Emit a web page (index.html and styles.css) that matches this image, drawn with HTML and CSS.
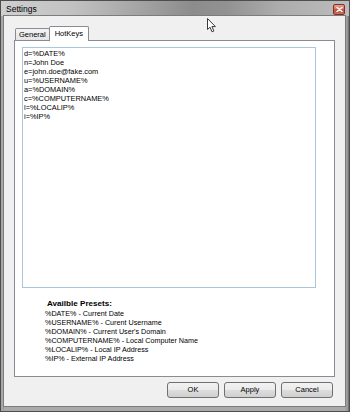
FILE: index.html
```html
<!DOCTYPE html>
<html>
<head>
<meta charset="utf-8">
<link rel="stylesheet" href="styles.css">
</head>
<body>
<div class="window">
  <div class="titlebar">
    <span class="title">Settings</span>
    <span class="close"><svg width="7" height="5" viewBox="0 0 7 5"><path d="M1 0.5 L6 4.5 M6 0.5 L1 4.5" stroke="#fff" stroke-width="1.4" stroke-linecap="round"/></svg></span>
  </div>
  <div class="client">
    <div class="tabs">
      <div class="tab">General</div>
      <div class="tab active">HotKeys</div>
    </div>
    <div class="panel">
      <div class="textbox">
        <div>d=%DATE%</div>
        <div>n=John Doe</div>
        <div>e=john.doe@fake.com</div>
        <div>u=%USERNAME%</div>
        <div>a=%DOMAIN%</div>
        <div>c=%COMPUTERNAME%</div>
        <div>l=%LOCALIP%</div>
        <div>i=%IP%</div>
      </div>
      <div class="presets">
        <div class="presets-title">Availble Presets:</div>
        <div>%DATE% - Current Date</div>
        <div>%USERNAME% - Curent Username</div>
        <div>%DOMAIN% - Current User's Domain</div>
        <div>%COMPUTERNAME% - Local Computer Name</div>
        <div>%LOCALIP% - Local IP Address</div>
        <div>%IP% - External IP Address</div>
      </div>
    </div>
    <div class="buttons">
      <button class="btn">OK</button>
      <button class="btn">Apply</button>
      <button class="btn">Cancel</button>
    </div>
  </div>
</div>
<svg class="cursor" width="10" height="15" viewBox="0 0 10 15"><path d="M0.5 0.5 L0.5 11.5 L3 9.2 L5 13.8 L6.9 13 L4.9 8.6 L8.4 8.6 Z" fill="#fff" stroke="#3a3a3a" stroke-width="1" stroke-linejoin="round"/></svg>
</body>
</html>
```

FILE: styles.css
```css
html, body {
  margin: 0;
  padding: 0;
  width: 350px;
  height: 412px;
  overflow: hidden;
  background: #a6a6a6;
}

body {
  position: relative;
  font-family: "Liberation Sans", Arial, sans-serif;
}

.window {
  box-sizing: border-box;
  width: 350px;
  height: 412px;
  border: 1px solid #4e4e4e;
  padding: 0 3px 4px 2px;
  display: flex;
  flex-direction: column;
  background:
    linear-gradient(90deg, #cfcfcf 0%, #c2c2c2 20%, #a4a4a4 40%, #8c8c8c 55%, #929292 65%, #adadad 80%, #bcbcbc 100%) top left / 100% 15px no-repeat,
    linear-gradient(90deg, #8a8a8a 0, #bdbdbd 1px, #9a9a9a 2px) left top / 3px 100% no-repeat,
    linear-gradient(90deg, #bdbdbd 0, #8a8a8a 1px, #b5b5b5 2px, #777 3px) right top / 4px 100% no-repeat,
    #aaaaaa;
}

.titlebar {
  height: 14px;
  display: flex;
  justify-content: space-between;
  align-items: flex-start;
}

.title {
  padding-left: 3px;
  padding-top: 3px;
  font-size: 8.5px;
  line-height: 10px;
  color: #000;
}

.close {
  box-sizing: border-box;
  width: 12px;
  height: 11px;
  margin-top: 3px;
  margin-right: 1px;
  border: 1px solid #7a3328;
  border-radius: 2px;
  background: linear-gradient(#e8a090 0%, #d8705e 45%, #c24a36 55%, #d0705a 100%);
  display: flex;
  align-items: center;
  justify-content: center;
}

.client {
  flex: 1;
  border: 1px solid #7c7c7c;
  background: #f0f0f0;
  display: flex;
  flex-direction: column;
}

.tabs {
  display: flex;
  align-items: flex-end;
  height: 14px;
  margin-top: 10px;
  padding-left: 11px;
}

.tab {
  box-sizing: border-box;
  height: 12px;
  padding: 0 3px;
  border: 1px solid #898c95;
  border-bottom: none;
  border-radius: 2px 2px 0 0;
  background: linear-gradient(#f4f4f4, #e4e4e4);
  font-size: 7.5px;
  line-height: 11px;
  color: #000;
}

.tab.active {
  position: relative;
  z-index: 1;
  height: 15px;
  margin-left: -1px;
  margin-bottom: -1px;
  padding: 0 5px;
  background: #fff;
  line-height: 13px;
}

.panel {
  box-sizing: border-box;
  height: 337px;
  margin-left: 10px;
  width: 321px;
  border: 1px solid #898c95;
  background: #fff;
  padding: 6px 0 0 7px;
}

.textbox {
  box-sizing: border-box;
  width: 294px;
  height: 241px;
  border: 1px solid #aac6df;
  padding: 1px 1px;
  font-size: 7.4px;
  line-height: 9.05px;
  color: #000;
}

.presets {
  margin-top: 10px;
  padding-left: 23px;
  font-size: 7.2px;
  line-height: 9px;
  color: #000;
}

.presets-title {
  padding-left: 2px;
  font-weight: bold;
  font-size: 8.1px;
  line-height: 11px;
}

.buttons {
  display: flex;
  justify-content: flex-end;
  gap: 5px;
  margin-top: 5px;
  padding-right: 12px;
}

.btn {
  box-sizing: border-box;
  width: 52px;
  height: 16px;
  margin: 0;
  padding: 0;
  border: 1px solid #707070;
  border-radius: 3px;
  background: linear-gradient(#f2f2f2 0%, #ebebeb 48%, #dddddd 52%, #cfcfcf 100%);
  font-family: "Liberation Sans", Arial, sans-serif;
  font-size: 7.5px;
  line-height: 14px;
  color: #000;
}

.cursor {
  position: absolute;
  left: 207px;
  top: 18px;
}
```
